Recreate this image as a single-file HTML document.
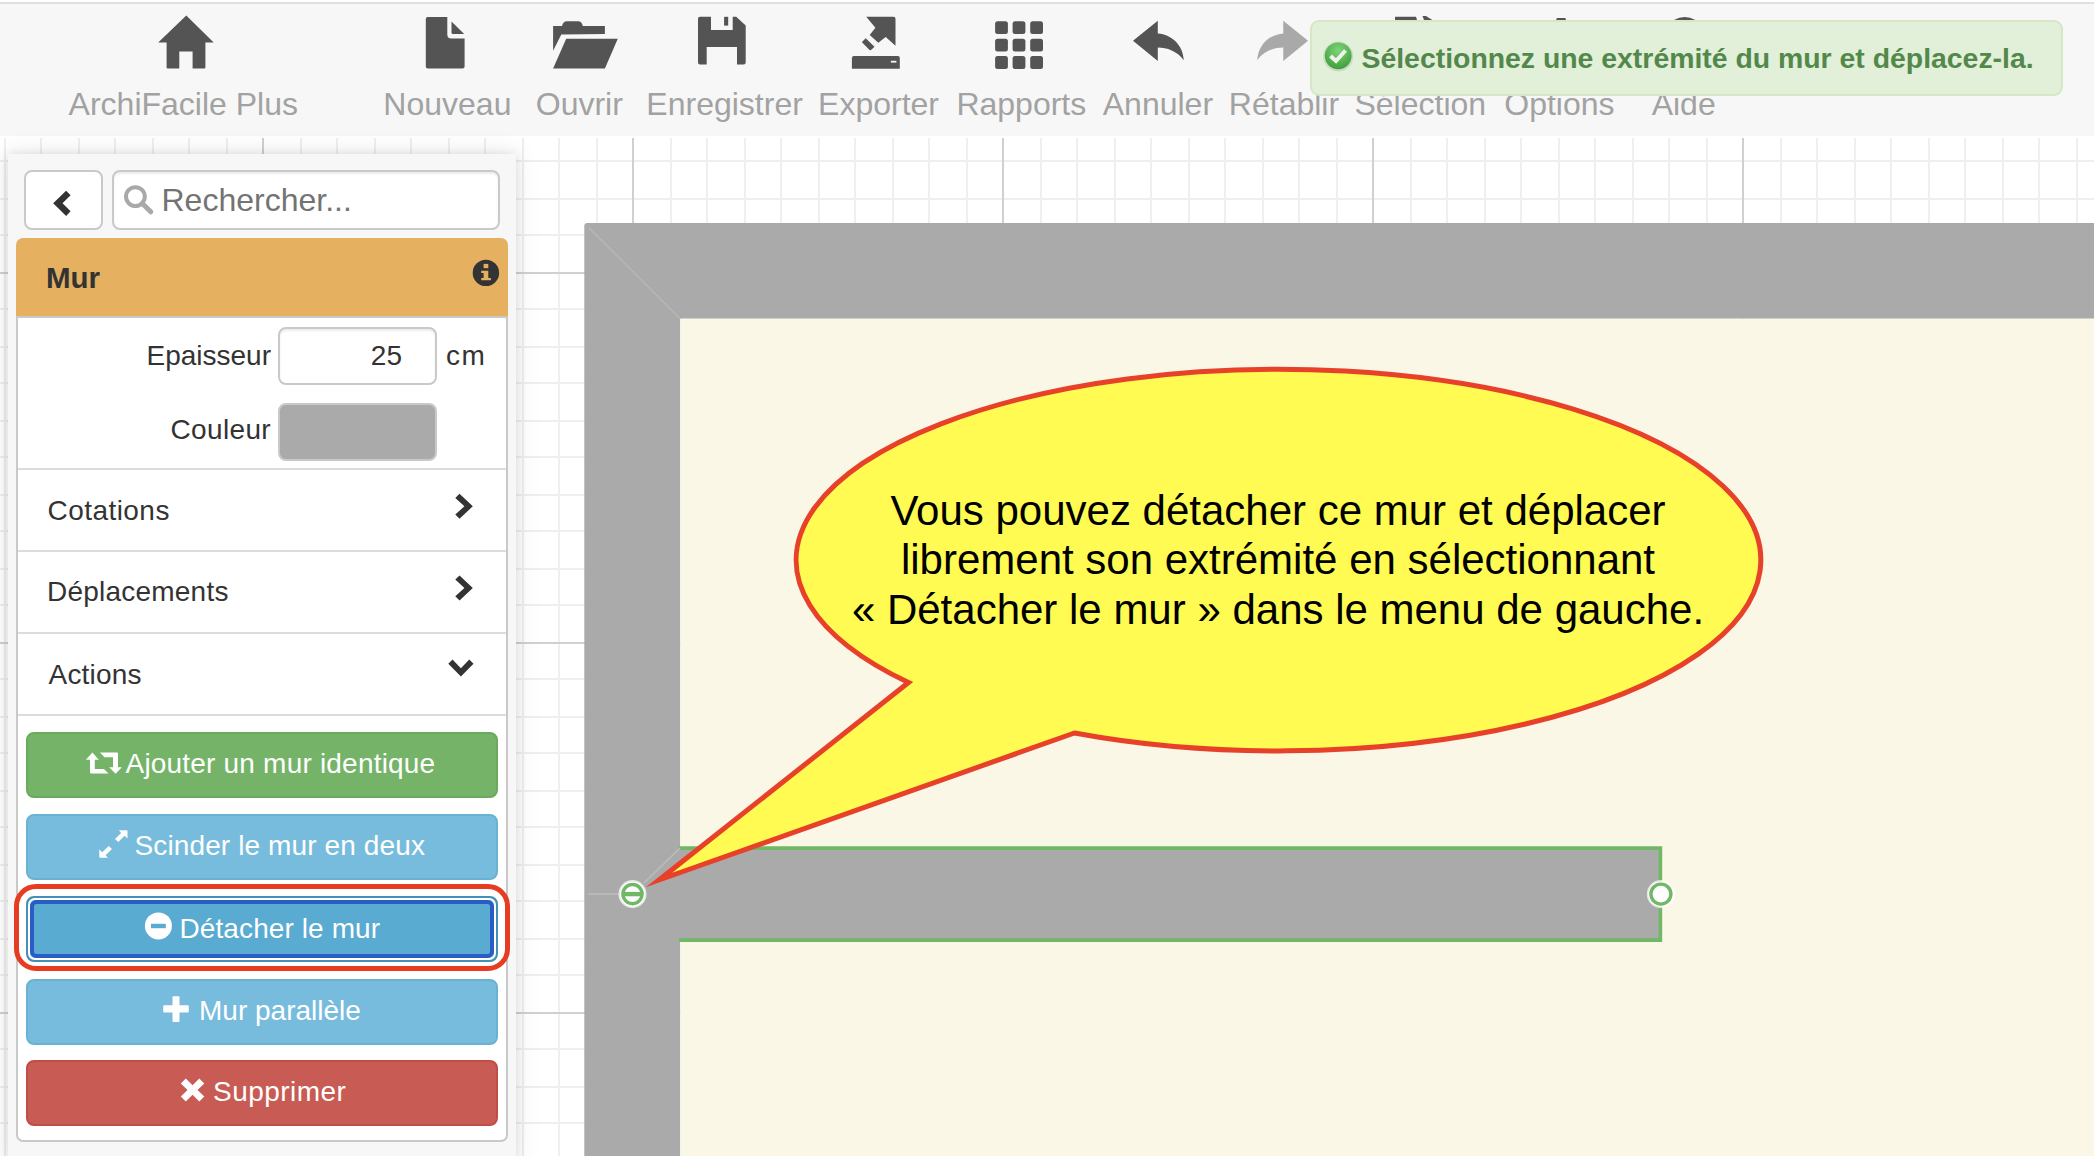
<!DOCTYPE html>
<html><head><meta charset="utf-8">
<style>
html,body{margin:0;padding:0;}
body{width:2094px;height:1156px;overflow:hidden;position:relative;background:#fff;font-family:"Liberation Sans",sans-serif;}
.a{position:absolute;}
.t{position:absolute;line-height:1;white-space:nowrap;}
#topline{left:0;top:2px;width:2094px;height:2px;background:#dfe1df;}
#toolbar{left:0;top:4px;width:2094px;height:132px;background:#f7f7f7;}
#canvas{left:0;top:138px;width:2094px;height:1018px;background-color:#fff;
 background-image:
  linear-gradient(to right,#d0d0d0 2px,transparent 2px),
  linear-gradient(to bottom,#d0d0d0 2px,transparent 2px),
  linear-gradient(to right,#efefef 2px,transparent 2px),
  linear-gradient(to right,#efefef 2px,transparent 2px),
  linear-gradient(to bottom,#efefef 2px,transparent 2px),
  linear-gradient(to bottom,#efefef 2px,transparent 2px);
 background-size:370px 1018px,2094px 370px,74px 1018px,74px 1018px,2094px 74px,2094px 74px;
 background-position:262px 0,0 134px,40px 0,4px 0,0 60px,0 22px;}
.lbl{color:#a2a2a2;font-size:32px;width:300px;text-align:center;top:88px;}
#panel{left:8px;top:154px;width:508px;height:1010px;background:#f7f7f7;box-shadow:0 0 10px rgba(0,0,0,0.10),0 0 26px rgba(0,0,0,0.09);}
.box{position:absolute;box-sizing:border-box;border:2px solid #c9c9c9;border-radius:8px;background:#fff;}
.dark{color:#333;font-size:28px;}
.sep{position:absolute;left:18px;width:488px;height:2px;background:#dcdcdc;}
.btn{position:absolute;box-sizing:border-box;left:26px;width:472px;height:66px;border-radius:8px;border:2px solid;}
.btxt{color:#fff;font-size:28px;}
</style></head>
<body>
<div id="topline" class="a"></div>
<div id="toolbar" class="a"></div>
<div id="canvas" class="a"></div>

<!-- canvas drawing -->
<svg class="a" style="left:0;top:0" width="2094" height="1156" viewBox="0 0 2094 1156">
 <path d="M584.3,226.1 Q584.3,223.1 587.3,223.1 L2094,223.1 L2094,318.7 L680.3,318.7 L680.3,1156 L584.3,1156 Z" fill="#aaaaaa"/>
 <rect x="680.3" y="318.7" width="1414" height="838" fill="#fbf7e6"/>
 <line x1="589" y1="228" x2="680.3" y2="318.7" stroke="#b9b9b9" stroke-width="1.2"/>
 <rect x="670" y="848" width="990.5" height="92.1" fill="#aaaaaa"/>
 <path d="M679,848.1 L1660.4,848.1 L1660.4,940.1 L679,940.1" fill="none" stroke="#70b766" stroke-width="3.6"/>
 <line x1="644" y1="883" x2="680" y2="848" stroke="#bcbcbc" stroke-width="1.5"/>
 <line x1="588" y1="894" x2="619" y2="894" stroke="#bcbcbc" stroke-width="1.5"/>
 <circle cx="632.5" cy="894.1" r="12.6" fill="#fff" stroke="rgba(255,255,255,0.7)" stroke-width="3"/>
 <circle cx="632.5" cy="894.1" r="9.6" fill="#fff" stroke="#70b766" stroke-width="3.4"/>
 <rect x="622" y="891.9" width="21" height="4.4" fill="#70b766"/>
 <circle cx="1660.9" cy="894.1" r="12.6" fill="#fff" stroke="rgba(255,255,255,0.7)" stroke-width="3"/>
 <circle cx="1660.9" cy="894.1" r="10" fill="#fff" stroke="#70b766" stroke-width="3.4"/>
 <path d="M908.5,682.5 L659,880 L1074.5,733 A482.3,190.8 0 1 0 908.5,682.5 Z" fill="#fffb52" stroke="#e8412a" stroke-width="5" stroke-miterlimit="20"/>
</svg>
<div class="t" style="left:778px;width:1000px;text-align:center;font-size:42px;color:#000;top:489.5px">Vous pouvez détacher ce mur et déplacer</div>
<div class="t" style="left:778px;width:1000px;text-align:center;font-size:42px;color:#000;top:539.3px">librement son extrémité en sélectionnant</div>
<div class="t" style="left:778px;width:1000px;text-align:center;font-size:42px;color:#000;top:589.2px">« Détacher le mur » dans le menu de gauche.</div>

<!-- sidebar -->
<div id="panel" class="a"></div>
<div class="box" style="left:24.3px;top:170px;width:79.2px;height:59.5px;"></div>
<svg class="a" style="left:0;top:0" width="520" height="240"><path d="M53.2,203.2 L66.1,190.8 L70.6,195.2 L62.5,203.2 L70.6,211.3 L66.1,215.9 Z" fill="#333"/></svg>
<div class="box" style="left:112.4px;top:170px;width:387.2px;height:59.5px;box-shadow:inset 0 2px 2px rgba(0,0,0,0.075);"></div>
<svg class="a" style="left:0;top:0" width="520" height="240"><circle cx="135.4" cy="196.6" r="9.4" fill="none" stroke="#a9a9a9" stroke-width="4"/><line x1="142.5" y1="203.7" x2="150.8" y2="211.8" stroke="#a9a9a9" stroke-width="5" stroke-linecap="round"/></svg>
<div class="t" style="left:161.5px;top:183.5px;font-size:32px;color:#737373;">Rechercher...</div>

<div class="a" style="left:16px;top:238px;width:492px;height:78px;background:#e5b060;border-radius:7px 7px 0 0;"></div>
<div class="a" style="box-sizing:border-box;left:16px;top:316px;width:492px;height:826px;background:#fff;border:2px solid #c9c9c9;border-radius:0 0 7px 7px;"></div>
<div class="t" style="left:46px;top:263px;font-size:29.5px;font-weight:bold;color:#333;">Mur</div>
<svg class="a" style="left:0;top:0" width="520" height="320"><circle cx="485.9" cy="272.9" r="13.2" fill="#333"/><rect x="483.6" y="263.9" width="4.7" height="4.3" fill="#e5b060"/><path d="M481.2,270.8 L488.3,270.8 L488.3,277.9 L490.9,277.9 L490.9,280.2 L481.2,280.2 L481.2,277.9 L483.6,277.9 L483.6,273 L481.2,273 Z" fill="#e5b060"/></svg>

<div class="t dark" style="right:1823px;top:342.2px;">Epaisseur</div>
<div class="box" style="left:278.4px;top:326.5px;width:159.1px;height:58.8px;box-shadow:inset 0 2px 2px rgba(0,0,0,0.075);"></div>
<div class="t dark" style="right:1692px;top:342.2px;">25</div>
<div class="t dark" style="left:446px;top:342.2px;letter-spacing:1.6px;">cm</div>
<div class="t dark" style="right:1823px;top:415.7px;letter-spacing:0.35px;">Couleur</div>
<div class="box" style="left:278.4px;top:402.6px;width:159.1px;height:58.4px;background:#aaaaaa;"></div>

<div class="sep" style="top:468px"></div>
<div class="sep" style="top:550px"></div>
<div class="sep" style="top:632px"></div>
<div class="sep" style="top:714px"></div>
<div class="t dark" style="left:47.5px;top:496.6px;letter-spacing:0.45px;">Cotations</div>
<div class="t dark" style="left:47px;top:578.1px;letter-spacing:0.22px;">Déplacements</div>
<div class="t dark" style="left:48.5px;top:660.6px;letter-spacing:0.2px;">Actions</div>
<svg class="a" style="left:0;top:0" width="520" height="720">
 <path d="M459.5,493.8 L472.8,506.3 L459.5,518.8 L455.3,514.6 L464.4,506.3 L455.3,498 Z" fill="#333"/>
 <path d="M459.5,575.4 L472.8,587.9 L459.5,600.4 L455.3,596.2 L464.4,587.9 L455.3,579.6 Z" fill="#333"/>
 <path d="M448.3,663.7 L452.5,659.5 L460.9,668.2 L469.3,659.5 L473.5,663.7 L460.9,676.6 Z" fill="#333"/>
</svg>

<!-- buttons -->
<div class="btn" style="top:731.8px;background:#75b468;border-color:#68ab5c;"></div>
<div class="btn" style="top:814.2px;background:#77bcdc;border-color:#6ab2d4;"></div>
<div class="btn" style="top:896px;height:65.5px;background:#59abd1;border-color:#4490b6;"></div>
<div class="a" style="box-sizing:border-box;left:28px;top:898px;width:468px;height:61.5px;border:2px solid #fff;border-radius:7px;"></div>
<div class="a" style="box-sizing:border-box;left:30px;top:900px;width:464px;height:57.5px;border:4px solid #2a5cc6;border-radius:6.5px;"></div>
<div class="btn" style="top:978.5px;background:#77bcdc;border-color:#6ab2d4;"></div>
<div class="btn" style="top:1060.1px;background:#c85b54;border-color:#c04d46;"></div>
<div class="a" style="box-sizing:border-box;left:14px;top:884px;width:496px;height:86.5px;border:5px solid #e63c22;border-radius:22px;"></div>

<div class="t btxt" style="left:125.5px;top:750.2px;letter-spacing:0.2px;">Ajouter un mur identique</div>
<div class="t btxt" style="left:134.5px;top:832.2px;letter-spacing:0.12px;">Scinder le mur en deux</div>
<div class="t btxt" style="left:179.5px;top:914.5px;letter-spacing:0.1px;">Détacher le mur</div>
<div class="t btxt" style="left:199px;top:996.8px;">Mur parallèle</div>
<div class="t btxt" style="left:213px;top:1078.3px;letter-spacing:0.45px;">Supprimer</div>
<svg class="a" style="left:0;top:0" width="520" height="1156">
 <!-- retweet -->
 <path d="M92.4,752.4 L98.8,759.7 L94.8,759.7 L94.8,768.9 L103.9,768.9 L108.5,773.6 L91,773.6 Q90,773.6 90,772.6 L90,759.7 L85.9,759.7 Z" fill="#fff"/>
 <path d="M115.6,773.8 L109.2,767.3 L113,767.3 L113,757.3 L104.5,757.3 L100,752.6 L117,752.6 Q118,752.6 118,753.6 L118,767.3 L121.9,767.3 Z" fill="#fff"/>
 <!-- expand -->
 <path d="M118.9,830.2 L126.5,830.2 Q127.5,830.2 127.5,831.2 L127.5,838.5 L124.5,835.8 L118.3,842 L115,839 L121.1,832.9 Z" fill="#fff"/>
 <path d="M108,857.8 L100.3,857.8 Q99.3,857.8 99.3,856.8 L99.3,849.4 L102.2,852.2 L108.7,845.9 L111.9,848.9 L105.6,855.2 Z" fill="#fff"/>
 <!-- minus circle -->
 <circle cx="158.4" cy="925.9" r="13.5" fill="#fff"/><rect x="151" y="923.8" width="14.8" height="4.4" fill="#59abd1"/>
 <!-- plus -->
 <rect x="163.2" y="1005.3" width="25.6" height="7.2" rx="1" fill="#fff"/><rect x="172.5" y="996.3" width="7" height="25.8" rx="1" fill="#fff"/>
 <!-- times -->
 <path d="M180.8,1083.5 L185.8,1078.5 L192.55,1085.25 L199.3,1078.5 L204.3,1083.5 L197.55,1090 L204.3,1096.5 L199.3,1101.5 L192.55,1094.75 L185.8,1101.5 L180.8,1096.5 L187.55,1090 Z" fill="#fff"/>
</svg>

<!-- toolbar icons -->
<svg class="a" style="left:0;top:0" width="2094" height="140" viewBox="0 0 2094 140">
 <g fill="#545454">
 <path d="M158.2,42.6 L186.3,15.4 L213.7,42.6 L205.4,42.6 L205.4,67.6 Q205.4,68.6 204.4,68.6 L192.6,68.6 L192.6,51.6 L179.3,51.6 L179.3,68.6 L167.6,68.6 Q166.6,68.6 166.6,67.6 L166.6,42.6 Z"/>
 <path d="M427.8,17.1 L447.3,17.1 L447.3,34.6 Q447.3,38.6 451.3,38.6 L464.6,38.6 L464.6,66.6 Q464.6,68.6 462.6,68.6 L427.8,68.6 Q425.8,68.6 425.8,66.6 L425.8,19.1 Q425.8,17.1 427.8,17.1 Z"/>
 <path d="M451.5,21.6 L464.2,33.9 L453,33.9 Q451.5,33.9 451.5,32.4 Z"/>
 <path d="M553.1,26 L562,26 Q563,21.3 567,21.3 L578,21.3 Q582,21.3 582.8,26 L604.9,26 L604.9,33.9 L561.3,34.4 L553.1,50.7 Z"/>
 <path d="M566.2,38.8 L617.8,38.8 L604.9,68.6 L553.1,68.6 Z"/>
 <path d="M700,16.8 L711,16.8 L711,30 L732.7,30 L732.7,16.8 L736.2,16.8 L745.7,25.6 L745.7,62.6 Q745.7,64.6 743.7,64.6 L737,64.6 L737,47 L706.7,47 L706.7,64.6 L700,64.6 Q698,64.6 698,62.6 L698,18.8 Q698,16.8 700,16.8 Z"/>
 <rect x="724.1" y="16.8" width="4.1" height="8.8"/>
 <path d="M866.2,16.8 L893.5,16.8 Q895.5,16.8 895.5,18.8 L895.5,45.7 L885.7,37.1 L878.3,42.8 L869.7,35 L875.4,27.7 Z"/>
 <path d="M863,41 L865.7,38.2 L874.5,46.8 L871.3,49.8 Q870.3,50.6 869.3,49.8 L862.2,42.6 Q861.6,41.8 863,41 Z"/>
 <path d="M853.9,56 L897.8,56 Q899.8,56 899.8,58 L899.8,68.7 L851.9,68.7 L851.9,58 Q851.9,56 853.9,56 Z"/>
 <rect x="995.1" y="21.2" width="12.8" height="12.8" rx="2.5"/><rect x="1012.6" y="21.2" width="12.8" height="12.8" rx="2.5"/><rect x="1030.2" y="21.2" width="12.8" height="12.8" rx="2.5"/>
 <rect x="995.1" y="38.7" width="12.8" height="12.8" rx="2.5"/><rect x="1012.6" y="38.7" width="12.8" height="12.8" rx="2.5"/><rect x="1030.2" y="38.7" width="12.8" height="12.8" rx="2.5"/>
 <rect x="995.1" y="56.1" width="12.8" height="12.8" rx="2.5"/><rect x="1012.6" y="56.1" width="12.8" height="12.8" rx="2.5"/><rect x="1030.2" y="56.1" width="12.8" height="12.8" rx="2.5"/>
 <path d="M1133,40.7 L1157.8,20.7 L1157.8,33.4 C1172,34.5 1183,45 1183.8,60.2 C1177,51 1167,47.5 1157.8,47.5 L1157.8,61 Z"/>
 <path d="M1395,16.7 L1416,16.7 L1417,20 L1395,20 Z"/><path d="M1422.5,16 L1426,16 L1432.3,20 L1424,20 Z"/>
 <path d="M1557,18 L1565.4,18 L1566,20 L1556,20 Z"/>
 <path d="M1674,20 Q1684.7,14 1695.4,20 Z"/>
 </g>
 <rect x="890.9" y="60.8" width="5.5" height="1.8" fill="#f7f7f7"/>
 <path d="M1133,40.7 L1157.8,20.7 L1157.8,33.4 C1172,34.5 1183,45 1183.8,60.2 C1177,51 1167,47.5 1157.8,47.5 L1157.8,61 Z" fill="#a9a9a9" transform="translate(2441.05,0) scale(-1,1)"/>
</svg>
<div class="t lbl" style="left:33.3px">ArchiFacile Plus</div>
<div class="t lbl" style="left:297.4px">Nouveau</div>
<div class="t lbl" style="left:429.3px">Ouvrir</div>
<div class="t lbl" style="left:574.6px">Enregistrer</div>
<div class="t lbl" style="left:728.5px">Exporter</div>
<div class="t lbl" style="left:871.3px">Rapports</div>
<div class="t lbl" style="left:1007.9px">Annuler</div>
<div class="t lbl" style="left:1134px">Rétablir</div>
<div class="t lbl" style="left:1270.3px">Sélection</div>
<div class="t lbl" style="left:1409.4px">Options</div>
<div class="t lbl" style="left:1533.7px">Aide</div>

<!-- toast -->
<div class="a" style="box-sizing:border-box;left:1310px;top:20px;width:753px;height:75.5px;background:#e2efd9;border:2px solid #d5e7c6;border-radius:9px;"></div>
<svg class="a" style="left:1310px;top:20px" width="60" height="75">
 <defs><radialGradient id="g1" cx="50%" cy="30%" r="70%"><stop offset="0" stop-color="#7fd47a"/><stop offset="1" stop-color="#3f9e3a"/></radialGradient></defs>
 <circle cx="28.2" cy="36.5" r="15" fill="rgba(60,100,60,0.15)"/>
 <circle cx="28.2" cy="35.8" r="13.4" fill="url(#g1)"/>
 <path d="M20.5,36 L26,41 L35.5,30.5" fill="none" stroke="#eef3ea" stroke-width="4"/>
</svg>
<div class="t" style="left:1361.5px;top:43.8px;font-size:28.4px;font-weight:bold;color:#52894a;">Sélectionnez une extrémité du mur et déplacez-la.</div>
</body></html>
